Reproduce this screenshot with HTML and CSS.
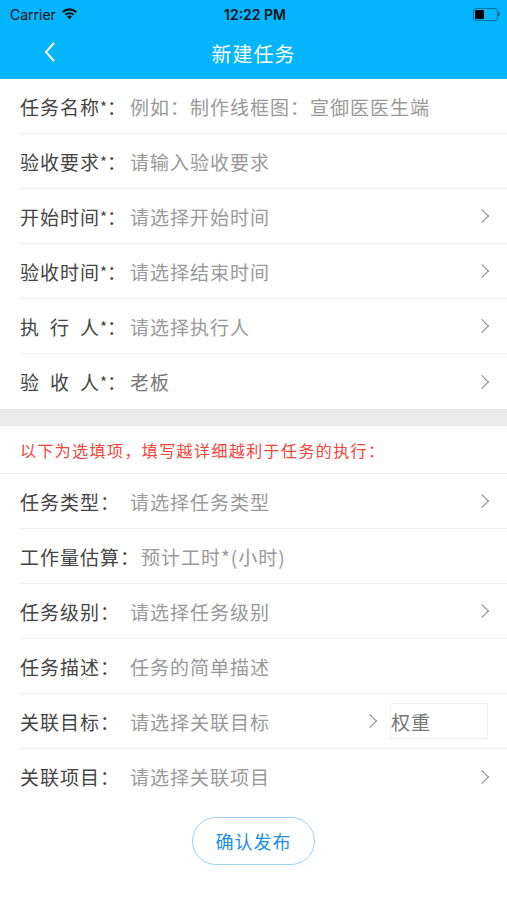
FILE: index.html
```html
<!DOCTYPE html>
<html lang="zh-CN">

<head>
    <meta charset="UTF-8">
    <meta name="viewport" content="width=device-width, initial-scale=1.0">
    <title>新建任务</title>
    <link rel="stylesheet" href="styles.css">
</head>

<body>
    <div class="header">
        <div class="status-bar">
            <div class="carrier">
                Carrier
                <svg class="wifi" width="17" height="12" viewBox="0 0 17 12">
                    <path d="M8.5 11.5 L6 8.6 A3.8 3.8 0 0 1 11 8.6 Z" fill="#111" />
                    <path d="M3.6 6.2 A7 7 0 0 1 13.4 6.2 L12.1 7.6 A5.2 5.2 0 0 0 4.9 7.6 Z" fill="#111" />
                    <path d="M1 3.4 A10.8 10.8 0 0 1 16 3.4 L14.7 4.9 A8.9 8.9 0 0 0 2.3 4.9 Z" fill="#111" />
                </svg>
            </div>
            <div class="time">12:22 PM</div>
            <div class="battery">
                <div class="battery-body"><div class="battery-level"></div></div>
                <div class="battery-cap"></div>
            </div>
        </div>
        <div class="nav-bar">
            <svg class="back" width="14" height="22" viewBox="0 0 14 22">
                <polyline points="11,2 3,11 11,20" fill="none" stroke="#fff" stroke-width="2" />
            </svg>
            <h1>新建任务</h1>
        </div>
    </div>

    <div class="form-group">
        <div class="row">
            <span class="label">任务名称<i>*</i>：</span>
            <span class="value placeholder">例如：制作线框图：宣御医医生端</span>
        </div>
        <div class="row">
            <span class="label">验收要求<i>*</i>：</span>
            <span class="value placeholder">请输入验收要求</span>
        </div>
        <div class="row">
            <span class="label">开始时间<i>*</i>：</span>
            <span class="value placeholder">请选择开始时间</span>
            <span class="arrow"></span>
        </div>
        <div class="row">
            <span class="label">验收时间<i>*</i>：</span>
            <span class="value placeholder">请选择结束时间</span>
            <span class="arrow"></span>
        </div>
        <div class="row">
            <span class="label"><span class="spread">执行</span>人<i>*</i>：</span>
            <span class="value placeholder">请选择执行人</span>
            <span class="arrow"></span>
        </div>
        <div class="row no-line">
            <span class="label"><span class="spread">验收</span>人<i>*</i>：</span>
            <span class="value filled">老板</span>
            <span class="arrow"></span>
        </div>
    </div>

    <div class="divider"></div>

    <div class="hint">以下为选填项，填写越详细越利于任务的执行：</div>

    <div class="form-group">
        <div class="row">
            <span class="label">任务类型：</span>
            <span class="value placeholder">请选择任务类型</span>
            <span class="arrow"></span>
        </div>
        <div class="row">
            <span class="label wide">工作量估算：</span>
            <span class="value placeholder">预计工时*(小时)</span>
        </div>
        <div class="row">
            <span class="label">任务级别：</span>
            <span class="value placeholder">请选择任务级别</span>
            <span class="arrow"></span>
        </div>
        <div class="row">
            <span class="label">任务描述：</span>
            <span class="value placeholder">任务的简单描述</span>
        </div>
        <div class="row">
            <span class="label">关联目标：</span>
            <span class="value placeholder">请选择关联目标</span>
            <span class="arrow"></span>
            <span class="weight">权重</span>
        </div>
        <div class="row no-line">
            <span class="label">关联项目：</span>
            <span class="value placeholder">请选择关联项目</span>
            <span class="arrow"></span>
        </div>
    </div>

    <div class="actions">
        <button class="submit">确认发布</button>
    </div>
</body>

</html>
```

FILE: styles.css
```css
body {
    margin: 0;
    width: 507px;
    background-color: #fff;
    font-family: "Noto Sans CJK SC", "Noto Sans", sans-serif;
    color: #444;
}

.header {
    background-color: #02b5fd;
}

.status-bar {
    height: 28px;
    display: flex;
    align-items: center;
    justify-content: space-between;
    padding: 0 7px 0 10px;
    font-family: Inter, "Liberation Sans", sans-serif;
    font-size: 14px;
    color: #111;
}

.carrier {
    width: 120px;
    display: flex;
    align-items: center;
    gap: 5px;
}

.time {
    font-weight: 600;
    font-size: 14px;
}

.battery {
    width: 120px;
    display: flex;
    justify-content: flex-end;
    align-items: center;
}

.battery-body {
    width: 21px;
    height: 9px;
    border: 1px solid #0a6ea0;
    border-radius: 3px;
    padding: 1px;
}

.battery-level {
    width: 9px;
    height: 9px;
    background-color: #000;
    border-radius: 1px;
}

.battery-cap {
    width: 2px;
    height: 4px;
    background-color: #0a6ea0;
    border-radius: 0 1px 1px 0;
}

.nav-bar {
    height: 51px;
    position: relative;
    display: flex;
    align-items: center;
    justify-content: center;
}

.nav-bar h1 {
    margin: 0;
    font-size: 20px;
    font-weight: 400;
    color: #fff;
    letter-spacing: 1px;
}

.back {
    position: absolute;
    left: 43px;
    top: 13px;
}

.row {
    height: 55px;
    margin-left: 20px;
    padding-right: 17px;
    display: flex;
    align-items: center;
    border-bottom: 1px solid #f1f1f1;
    box-sizing: border-box;
    font-size: 19px;
    letter-spacing: 1px;
}

.row.no-line {
    border-bottom: none;
}

.label {
    width: 110px;
    flex-shrink: 0;
    color: #444;
    white-space: nowrap;
}

.label.wide {
    width: 121px;
}

.label i {
    font-style: normal;
    font-size: 15px;
    letter-spacing: 0;
    vertical-align: 2px;
}

.spread {
    letter-spacing: 11px;
}

.value {
    flex: 1;
    white-space: nowrap;
}

.placeholder {
    color: #999;
}

.filled {
    color: #777;
}

.arrow {
    width: 9px;
    height: 9px;
    border-top: 1.5px solid #888;
    border-right: 1.5px solid #888;
    transform: rotate(45deg);
    margin-right: 3px;
}

.weight {
    width: 98px;
    height: 36px;
    margin-left: 12px;
    margin-right: 2px;
    border: 1px solid #f1f1f1;
    box-sizing: border-box;
    display: flex;
    align-items: center;
    color: #777;
}

.divider {
    height: 17px;
    background-color: #ebebeb;
}

.hint {
    height: 48px;
    padding-left: 20px;
    display: flex;
    align-items: center;
    border-bottom: 1px solid #ececec;
    box-sizing: border-box;
    font-size: 16px;
    letter-spacing: 1.4px;
    color: #f2443b;
}

.actions {
    display: flex;
    justify-content: center;
    padding-top: 13px;
}

.submit {
    width: 123px;
    height: 48px;
    border: 1.5px solid #9ed2f4;
    border-radius: 24px;
    background-color: #fff;
    font-family: "Noto Sans CJK SC", sans-serif;
    font-size: 18px;
    letter-spacing: 1px;
    color: #1d8fe0;
}
```
